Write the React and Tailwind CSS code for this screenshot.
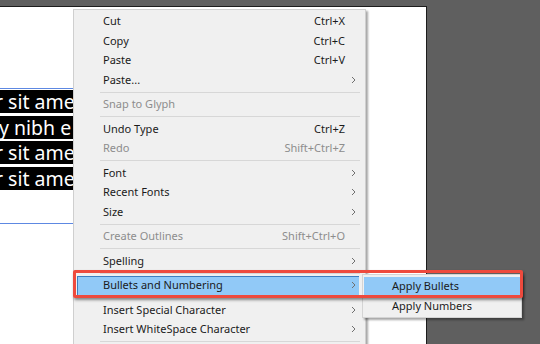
import React from 'react';

const MENU = [
  { label: 'Cut', shortcut: 'Ctrl+X' },
  { label: 'Copy', shortcut: 'Ctrl+C' },
  { label: 'Paste', shortcut: 'Ctrl+V' },
  { label: 'Paste...', sub: true },
  { sep: true },
  { label: 'Snap to Glyph', disabled: true },
  { sep: true },
  { label: 'Undo Type', shortcut: 'Ctrl+Z' },
  { label: 'Redo', shortcut: 'Shift+Ctrl+Z', disabled: true },
  { sep: true },
  { label: 'Font', sub: true },
  { label: 'Recent Fonts', sub: true },
  { label: 'Size', sub: true },
  { sep: true },
  { label: 'Create Outlines', shortcut: 'Shift+Ctrl+O', disabled: true },
  { sep: true },
  { label: 'Spelling', sub: true },
  { sep: true },
  { label: 'Bullets and Numbering', sub: true, active: true },
  { sep: true },
  { label: 'Insert Special Character', sub: true },
  { label: 'Insert WhiteSpace Character', sub: true },
  { sep: true },
  { label: 'Go to Link', sub: true },
];

// visible slice of each text line, the rest sits under the menu
const LINES = [
  { text: 'r sit amet', shift: '-ml-[5px]' },
  { text: 'y nibh e', shift: '-ml-[1px]' },
  { text: 'r sit amet', shift: '-ml-[5px]' },
  { text: 'r sit amet', shift: '-ml-[5px]' },
];

const Chevron = () => (
  <svg width="5" height="8" viewBox="0 0 5 8" className="block">
    <path d="M1 1 L4 4 L1 7" fill="none" stroke="#707070" strokeWidth="1" />
  </svg>
);

const MenuRow = ({ item }) => {
  if (item.sep) {
    return (
      <div className="pt-[2px] pb-[2px] pl-[26px] pr-[2px]">
        <div className="h-px bg-[#d7d7d7]" />
      </div>
    );
  }
  return (
    <div
      className={
        'flex items-center h-[19.5px] mx-[3px] pl-[26px] ' +
        (item.active ? 'bg-[#91c9f7] shadow-[inset_1px_1px_0_#3d7fc0]' : '') +
        (item.disabled ? ' text-[#8d8d8d]' : ' text-[#1b1b1b]')
      }
    >
      <span className="flex-1 whitespace-nowrap">{item.label}</span>
      {item.shortcut && <span className="whitespace-nowrap">{item.shortcut}</span>}
      <span className="w-[14px] flex justify-end pr-[3px]">{item.sub && <Chevron />}</span>
    </div>
  );
};

export default function App() {
  return (
    <div
      className="relative w-[540px] h-[344px] overflow-hidden bg-[#5f5f5f] flex flex-col"
      style={{ fontFamily: '"Noto Sans", "Open Sans", Arial, sans-serif' }}
    >
      <div className="h-[6px] shrink-0" />
      <div className="w-[427px] flex-1 bg-white border-t border-r border-[#1c1c1c]">
        {/* text frame */}
        <div className="mt-[81px] w-[73px] h-[136px] border-t border-b border-[#5d88e2] overflow-hidden flex flex-col gap-[2.5px] pt-[1px]">
          {LINES.map((l, i) => (
            <div key={i} className="h-[23px] shrink-0 bg-black text-white text-[19.5px] leading-[23px] whitespace-nowrap overflow-hidden">
              <span className={'inline-block ' + l.shift}>{l.text}</span>
            </div>
          ))}
        </div>
      </div>

      {/* context menu */}
      <div className="absolute left-[73px] top-[9px] w-[293px] h-[360px] bg-[#f0f0f0] border border-[#cfcfcf] shadow-[2px_2px_2px_rgba(0,0,0,0.35)] pt-[1.5px] text-[11px] pr-[3px]">
        {MENU.map((item, i) => (
          <MenuRow key={i} item={item} />
        ))}
      </div>

      {/* submenu */}
      <div className="absolute left-[362px] top-[274px] w-[160px] bg-[#f0f0f0] border border-[#d4d4d4] shadow-[2px_2px_2px_rgba(0,0,0,0.35)] pt-[1.5px] pb-[1px] text-[11px] text-[#1b1b1b]">
        <div className="h-[19.5px] mx-[1px] pl-[28px] flex items-center bg-[#91c9f7]">Apply Bullets</div>
        <div className="h-[19.5px] mx-[1px] pl-[28px] flex items-center">Apply Numbers</div>
      </div>

      {/* callout box */}
      <div className="absolute left-[73px] top-[270px] w-[450px] h-[28px] border-[3px] border-[#ee4a3d] rounded-[2px] shadow-[1px_2px_3px_rgba(0,0,0,0.45)]" />
    </div>
  );
}
